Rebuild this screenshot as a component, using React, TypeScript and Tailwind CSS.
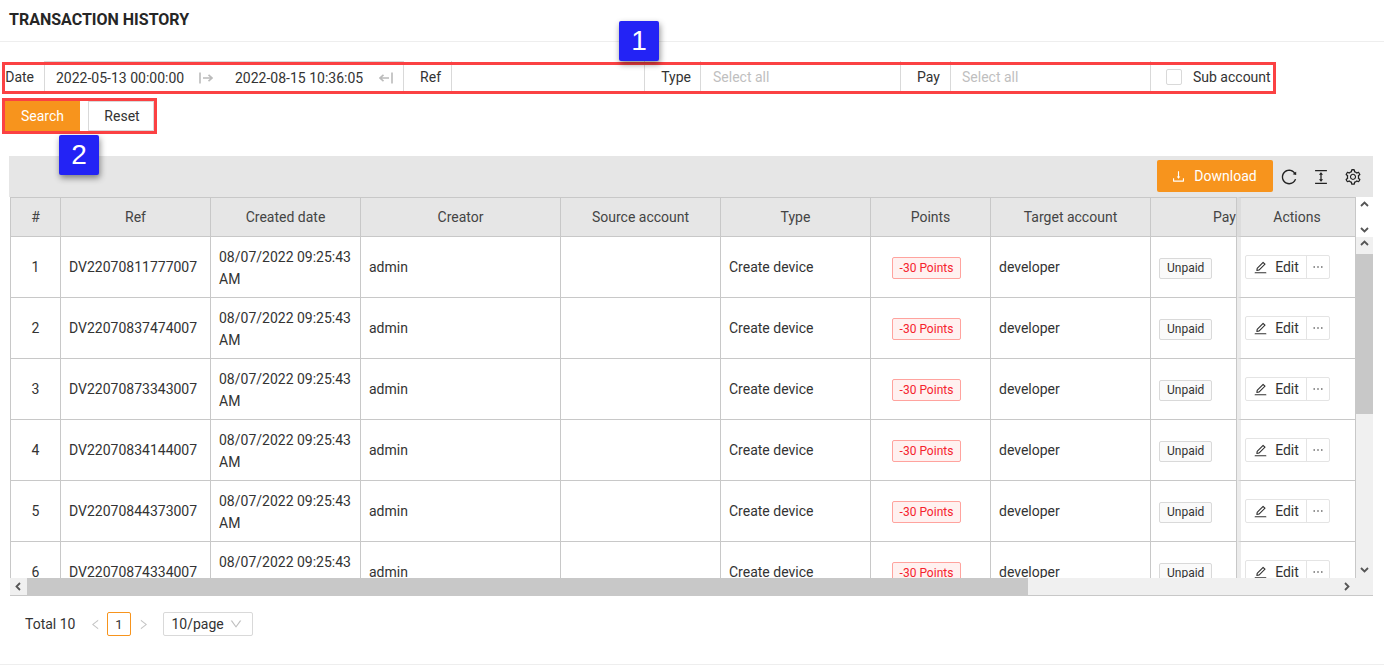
import React from 'react';
import {
  AiOutlineColumnHeight,
  AiOutlineDown,
  AiOutlineDownload,
  AiOutlineEdit,
  AiOutlineEllipsis,
  AiOutlineLeft,
  AiOutlineReload,
  AiOutlineRight,
  AiOutlineSetting,
} from 'react-icons/ai';

const refs = [
  'DV22070811777007',
  'DV22070837474007',
  'DV22070873343007',
  'DV22070834144007',
  'DV22070844373007',
  'DV22070874334007',
];

const columns = [
  { title: '#', width: 51 },
  { title: 'Ref', width: 150 },
  { title: 'Created date', width: 150 },
  { title: 'Creator', width: 200 },
  { title: 'Source account', width: 160 },
  { title: 'Type', width: 150 },
  { title: 'Points', width: 120 },
  { title: 'Target account', width: 160 },
];

function Chevron({ dir }: { dir: 'up' | 'down' | 'left' | 'right' }) {
  const points = {
    up: '2,7 5.5,3.5 9,7',
    down: '2,4 5.5,7.5 9,4',
    left: '7,2 3.5,5.5 7,9',
    right: '4,2 7.5,5.5 4,9',
  }[dir];
  return (
    <svg width="11" height="11" viewBox="0 0 11 11" fill="none" stroke="#555" strokeWidth="1.8">
      <polyline points={points} />
    </svg>
  );
}

function RangeArrow({ flip }: { flip?: boolean }) {
  return (
    <svg width="14" height="12" viewBox="0 0 14 12" fill="none" stroke="#bbbbbb" strokeWidth="1.6" className={flip ? 'rotate-180' : ''}>
      <path d="M1 0.500v11M4 6h9M9.500 2.800 13 6l-3.500 3.200" />
    </svg>
  );
}

function FilterLabel({ children, width, pad = 'pr-[10px]' }: { children: React.ReactNode; width: string; pad?: string }) {
  return (
    <div className={`${width} ${pad} h-full flex items-center justify-end border-r border-[#d9d9d9] shrink-0`}>
      {children}
    </div>
  );
}

function Row({ index, code }: { index: number; code: string }) {
  const cell = 'border-r border-b border-[#c8c8c8] px-2 h-[61px] overflow-hidden whitespace-nowrap';
  return (
    <tr>
      <td className={`${cell} border-l text-center`}>{index}</td>
      <td className={cell}>{code}</td>
      <td className={`${cell} !whitespace-normal leading-[22px] pt-[2px]`}>08/07/2022 09:25:43 AM</td>
      <td className={cell}>admin</td>
      <td className={cell}></td>
      <td className={cell}>Create device</td>
      <td className={`${cell} text-center pt-[2px]`}>
        <span className="inline-flex items-center h-[22px] w-[69px] justify-center mr-2 text-xs bg-[#fff1f0] border border-[#ffa39e] text-[#f5222d] rounded-[2px]">
          -30 Points
        </span>
      </td>
      <td className={cell}>developer</td>
      <td className={`${cell} pt-[2px]`}>
        <span className="inline-flex items-center h-[21px] px-[7px] text-xs bg-[#fafafa] border border-[#d9d9d9] rounded-[2px]">
          Unpaid
        </span>
      </td>
      <td className={`${cell} border-l-[4px] border-l-[#ececec] !pl-[4px] !pr-0`}>
        <div className="flex h-[24px] w-[85px] border border-[#e4e4e4] rounded-[2px] bg-white">
          <div className="w-[61px] flex items-center justify-center gap-[7px] border-r border-[#e4e4e4]">
            <AiOutlineEdit size={15} />
            <span>Edit</span>
          </div>
          <div className="flex-1 flex items-center justify-center">
            <AiOutlineEllipsis size={14} />
          </div>
        </div>
      </td>
    </tr>
  );
}

export default function App() {
  return (
    <div className="relative h-[665px] overflow-hidden bg-white text-sm text-[#333] border-b border-[#eeeeee] font-['Roboto',sans-serif]">
      {/* Header */}
      <div className="h-[42px] border-b border-[#eeeeee] pl-[9px] pt-[11px]">
        <h1 className="text-base leading-[18px] font-bold text-[#262626]">TRANSACTION HISTORY</h1>
      </div>

      {/* Filters */}
      <div className="mt-[19px] h-[32px] flex items-center">
        <FilterLabel width="w-[45px]">Date</FilterLabel>
        <div className="w-[359px] h-full flex items-center border-t border-r border-[#d9d9d9] shrink-0 pl-[11px]">
          <span className="w-[143px]">2022-05-13 00:00:00</span>
          <RangeArrow />
          <span className="ml-[22px] w-[144px]">2022-08-15 10:36:05</span>
          <RangeArrow flip />
        </div>
        <FilterLabel width="w-[48px]">Ref</FilterLabel>
        <div className="w-[193px] h-full border-r border-[#d9d9d9] shrink-0"></div>
        <FilterLabel width="w-[56px]" pad="pr-[9px]">Type</FilterLabel>
        <div className="w-[200px] h-full flex items-center pl-3 text-[#bfbfbf] border-r border-[#d9d9d9] shrink-0">Select all</div>
        <FilterLabel width="w-[50px]">Pay</FilterLabel>
        <div className="w-[200px] h-full flex items-center pl-[11px] text-[#bfbfbf] border-r border-[#d9d9d9] shrink-0">Select all</div>
        <div className="h-full flex items-center pl-[15px]">
          <span className="w-4 h-4 border border-[#d9d9d9] rounded-[2px] bg-white"></span>
          <span className="ml-[11px]">Sub account</span>
        </div>
      </div>

      {/* Actions */}
      <div className="mt-[8px] h-[30px] flex pl-[5px]">
        <button className="w-[75px] bg-[#f7941d] text-white">Search</button>
        <button className="ml-[8px] w-[66px] pl-[2px] border border-[#d9d9d9]">Reset</button>
      </div>

      {/* Toolbar */}
      <div className="mt-[25px] ml-[9px] w-[1364px] h-[41px] bg-[#e6e6e6] flex items-center justify-end pr-[11px]">
        <button className="w-[116px] h-[32px] mb-px flex items-center justify-center gap-[8px] pr-[2px] rounded-[2px] bg-[#f7941d] text-white">
          <AiOutlineDownload size={15} />
          <span>Download</span>
        </button>
        <div className="flex items-center gap-[14px] ml-[7px] text-[#222]">
          <AiOutlineReload size={18} />
          <AiOutlineColumnHeight size={18} />
          <AiOutlineSetting size={18} />
        </div>
      </div>

      {/* Table */}
      <div className="ml-[9px] w-[1364px] h-[399px] flex pl-px">
        <div className="w-[1346px] shrink-0 flex flex-col">
          <div className="h-[381px] overflow-hidden">
            <table className="table-fixed w-[1346px] border-separate border-spacing-0">
              <colgroup>
                {columns.map((c) => (
                  <col key={c.title} style={{ width: c.width }} />
                ))}
                <col style={{ width: 86 }} />
                <col style={{ width: 119 }} />
              </colgroup>
              <thead>
                <tr className="bg-[#e6e6e6] text-[#444]">
                  {columns.map((c, i) => (
                    <th
                      key={c.title}
                      className={`h-[40px] font-normal text-center border-t border-r border-b border-[#c8c8c8] ${i === 0 ? 'border-l' : ''}`}
                    >
                      {c.title}
                    </th>
                  ))}
                  <th className="font-normal text-right border-t border-r border-b border-[#c8c8c8]">Pay</th>
                  <th className="font-normal text-center pr-[2px] border-t border-r border-b border-[#c8c8c8] border-l-[4px] border-l-[#dcdcdc]">Actions</th>
                </tr>
              </thead>
              <tbody>
                {refs.map((code, i) => (
                  <Row key={code} index={i + 1} code={code} />
                ))}
              </tbody>
            </table>
          </div>
          {/* Horizontal scrollbar */}
          <div className="h-[18px] flex items-center bg-[#f0f0f0] border-b border-[#c8c8c8]">
            <div className="w-[17px] h-full flex items-center justify-center"><Chevron dir="left" /></div>
            <div className="w-[1001px] h-full bg-[#c8c8c8]"></div>
            <div className="flex-1"></div>
            <div className="w-[17px] h-full mr-[1px] flex items-center justify-center"><Chevron dir="right" /></div>
          </div>
        </div>
        {/* Vertical scrollbar */}
        <div className="flex-1 flex flex-col items-center bg-[#f0f0f0] border-b border-[#c8c8c8]">
          <div className="h-[40px] w-full bg-white flex flex-col items-center justify-between py-[2px]">
            <Chevron dir="up" />
            <Chevron dir="down" />
          </div>
          <div className="h-[17px] pb-[4px] flex items-center"><Chevron dir="up" /></div>
          <div className="h-[160px] w-full bg-[#c8c8c8]"></div>
          <div className="flex-1"></div>
          <div className="h-[20px] mb-[16px] flex items-center"><Chevron dir="down" /></div>
        </div>
      </div>

      {/* Pagination */}
      <div className="mt-[16px] h-[24px] flex items-center pl-[25px]">
        <span>Total 10</span>
        <AiOutlineLeft size={13} className="ml-[14px] text-[#c4c4c4]" />
        <span className="ml-[5px] w-[24px] h-[24px] flex items-center justify-center border border-[#f7941d] rounded-[2px] text-[13px] pt-[2px] pr-px">1</span>
        <AiOutlineRight size={13} className="ml-[6px] text-[#c4c4c4]" />
        <div className="ml-[13px] w-[90px] h-[24px] flex items-center border border-[#d9d9d9] rounded-[2px] pl-[7px]">
          <span>10/page</span>
          <AiOutlineDown size={14} className="ml-[5px] text-[#bfbfbf]" />
        </div>
      </div>

      {/* Annotations */}
      <div className="absolute left-[2px] top-[62px] w-[1274px] h-[32px] border-[3px] border-[#fb4143]"></div>
      <div className="absolute left-[2px] top-[98px] w-[155px] h-[36px] border-[3px] border-[#fb4143]"></div>
      <div className="absolute left-[619px] top-[21px] w-[40px] h-[40px] flex items-center justify-center rounded-[2px] bg-[#2323f5] text-white text-[28px] font-['Liberation_Sans',sans-serif] shadow-[1px_3px_6px_rgba(0,0,0,0.45)]">1</div>
      <div className="absolute left-[59px] top-[135px] w-[40px] h-[40px] flex items-center justify-center rounded-[2px] bg-[#2323f5] text-white text-[28px] font-['Liberation_Sans',sans-serif] shadow-[1px_3px_6px_rgba(0,0,0,0.45)]">2</div>
    </div>
  );
}
